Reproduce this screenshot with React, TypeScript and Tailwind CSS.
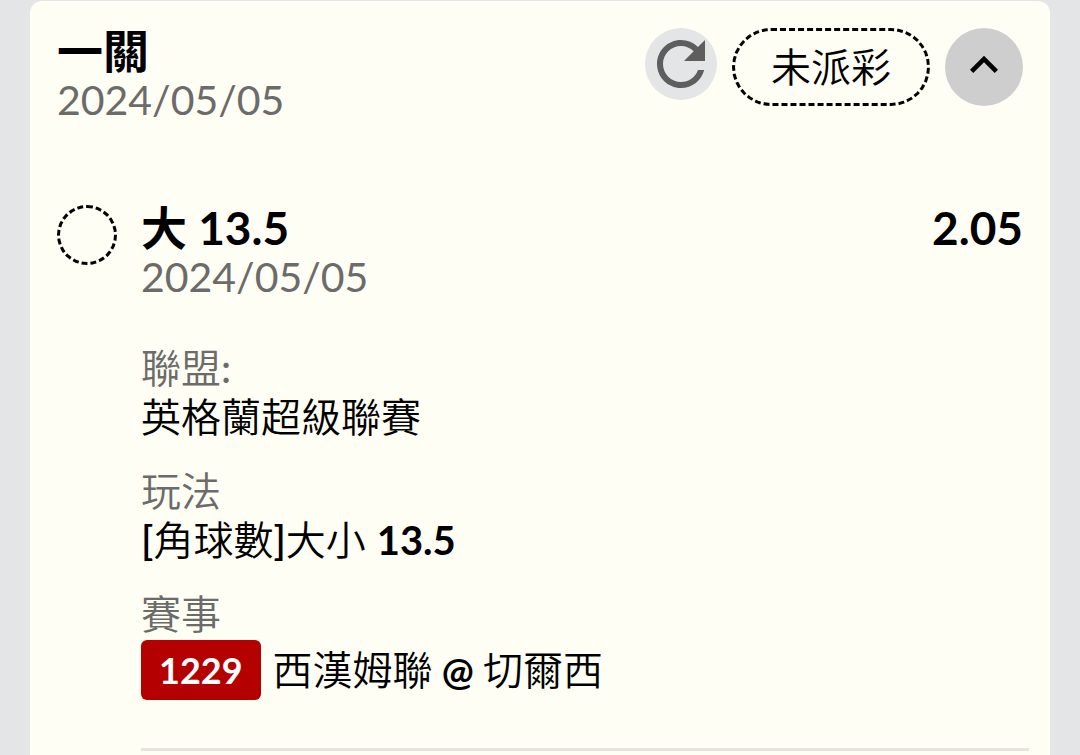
import React from 'react';
import { MdKeyboardArrowUp, MdRefresh } from 'react-icons/md';

interface Leg {
  pick: string;
  date: string;
  odds: string;
  league: string;
  category: string;
  market: string;
  line: string;
  matchNo: string;
  away: string;
  home: string;
}

const leg: Leg = {
  pick: '大 13.5',
  date: '2024/05/05',
  odds: '2.05',
  league: '英格蘭超級聯賽',
  category: '角球數',
  market: '大小',
  line: '13.5',
  matchNo: '1229',
  away: '西漢姆聯',
  home: '切爾西',
};

function LegDetails({ leg }: { leg: Leg }) {
  return (
    <dl className="mt-[41px] flex flex-col gap-[25px] text-[40px] leading-[49px] font-[350]">
      {/* League */}
      <div>
        <dt className="text-[#6b6b69]">
          聯盟<span className="font-medium">:</span>
        </dt>
        <dd>{leg.league}</dd>
      </div>

      {/* Market */}
      <div>
        <dt className="text-[#6b6b69]">玩法</dt>
        <dd>
          <span className="font-semibold">[</span>
          {leg.category}
          <span className="font-semibold">]</span>
          {leg.market} <span className="font-bold">{leg.line}</span>
        </dd>
      </div>

      {/* Match */}
      <div>
        <dt className="text-[#6b6b69]">賽事</dt>
        <dd className="mt-px flex items-center gap-3">
          <span className="rounded-md bg-[#b50000] px-[18px] text-[36px] leading-[60px] font-bold text-white">
            {leg.matchNo}
          </span>
          <span>
            {leg.away}
            <span className="text-[38px] font-bold"> @ </span>
            {leg.home}
          </span>
        </dd>
      </div>
    </dl>
  );
}

export default function App() {
  return (
    <div className="h-screen overflow-hidden bg-[#e4e5e7] px-[30px] pt-px font-[Lato,'Noto_Sans_CJK_TC',sans-serif] text-black">
      <main className="min-h-full rounded-t-xl bg-[#fffef5] pt-[27px] pr-[21px] pl-[27px]">
        {/* Header */}
        <header className="flex items-start justify-between pr-1.5">
          <div>
            <h1 className="text-[46px] leading-[46px] font-bold">一關</h1>
            <p className="text-[41px] leading-[52px] text-[#6b6b69]">{leg.date}</p>
          </div>
          <div className="flex items-start gap-[15px]">
            <button
              type="button"
              aria-label="重新整理"
              className="rounded-full bg-[#e4e5e7] text-[#5e5e5e]"
            >
              <MdRefresh className="size-[72px]" />
            </button>
            <span className="rounded-full border-3 border-dashed border-black px-9 text-[40px] leading-[72px] font-[350]">
              未派彩
            </span>
            <button
              type="button"
              aria-label="收合"
              className="flex size-[78px] items-center justify-center rounded-full bg-[#cecece] pb-1"
            >
              <MdKeyboardArrowUp className="size-14" />
            </button>
          </div>
        </header>

        {/* Selection */}
        <section className="mt-[79px] flex items-start gap-6">
          <span className="size-[60px] shrink-0 rounded-full border-3 border-dashed border-black" />
          <div className="flex-1 border-b-3 border-[#e5e3dc] pb-12">
            <div className="flex justify-between pr-1.5 text-[46px] leading-[46px] font-bold">
              <h2>{leg.pick}</h2>
              <span>{leg.odds}</span>
            </div>
            <p className="text-[41px] leading-[52px] text-[#6b6b69]">{leg.date}</p>
            <LegDetails leg={leg} />
          </div>
        </section>
      </main>
    </div>
  );
}
